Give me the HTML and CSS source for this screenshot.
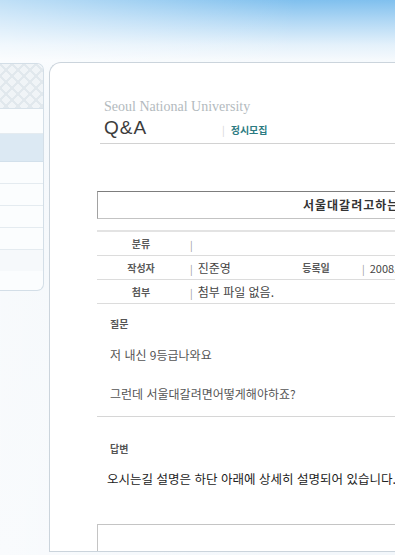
FILE: index.html
```html
<!doctype html>
<html lang="ko">
<head>
	<meta charset="UTF-8">
	<title>Q&amp;A - 서울대학교</title>
	<link rel="stylesheet" href="styles.css">
</head>
<body>
	<div id="page">
		<div class="top"></div>
		<div class="layout">
			<div class="side">
				<div class="side-pattern"></div>
				<ul class="side-menu">
					<li></li>
					<li class="on"></li>
					<li></li>
					<li></li>
					<li></li>
					<li></li>
					<li class="last"></li>
				</ul>
			</div>
			<div class="main">
				<div class="head">
					<p class="brand">Seoul National University</p>
					<div class="title-row">
						<span class="qa">Q&amp;A</span>
						<span class="cate"><i>|</i>정시모집</span>
					</div>
				</div>

				<div class="subject">서울대갈려고하는</div>
				<div class="band"></div>
				<div class="info">
					<div class="row">
						<span class="lbl">분류</span>
						<span class="val"><i>|</i></span>
					</div>
					<div class="row">
						<span class="lbl">작성자</span>
						<span class="val short"><i>|</i>진준영</span>
						<span class="lbl lbl2">등록일</span>
						<span class="val date"><i>|</i>2008.10.21</span>
					</div>
					<div class="row">
						<span class="lbl">첨부</span>
						<span class="val"><i>|</i>첨부 파일 없음.</span>
					</div>
				</div>

				<div class="question">
					<h4>질문</h4>
					<p class="first">저 내신 9등급나와요</p>
					<p>그런데 서울대갈려면어떻게해야하죠?</p>
				</div>

				<div class="answer">
					<h4>답변</h4>
					<p>오시는길 설명은 하단 아래에 상세히 설명되어 있습니다.</p>
				</div>

				<div class="reply-box"></div>
			</div>
		</div>
	</div>
</body>
</html>
```

FILE: styles.css
```css
* {
	margin: 0;
	padding: 0;
}
html, body {
	width: 395px;
	height: 555px;
	overflow: hidden;
}
body {
	font-family: "Noto Sans CJK KR", "Noto Sans", sans-serif;
	font-size: 12px;
	color: #444;
	background: #f1f6fa;
}
ul {
	list-style: none;
}
i {
	font-style: normal;
}
#page {
	height: 555px;
	background:
		linear-gradient(to right, rgba(255,255,255,.5), rgba(255,255,255,0) 75%),
		linear-gradient(to bottom, #80c0ee 0, #b3d9f5 22px, #e4f1fb 45px, #f6fafd 60px, #eef4f9 120px, #f3f7fb 100%);
}
.top {
	height: 62px;
}
.layout {
	display: flex;
	align-items: flex-start;
}

/* left menu */
.side {
	width: 43px;
	height: 226px;
	margin-top: 1px;
	background: #fbfdfe;
	border: 1px solid #d3dee7;
	border-left: 0;
	border-radius: 0 7px 7px 0;
	overflow: hidden;
	flex: none;
}
.side-pattern {
	height: 44px;
	border-bottom: 1px solid #d8e2ea;
	background-color: #f0f4f7;
	background-image:
		linear-gradient(45deg, transparent 44%, #e1e8ed 45%, #e1e8ed 55%, transparent 56%),
		linear-gradient(-45deg, transparent 44%, #e1e8ed 45%, #e1e8ed 55%, transparent 56%);
	background-size: 12px 12px;
}
.side-menu li {
	height: 21px;
	border-bottom: 1px solid #e4ebf0;
}
.side-menu li.on {
	height: 27px;
	background: #dce9f3;
	border-bottom-color: #d2e0eb;
}
.side-menu li:first-child {
	height: 24px;
}
.side-menu li.last {
	border-bottom: 0;
	background: #f6f9fb;
}

/* main panel */
.main {
	width: 620px;
	height: 488px;
	margin-left: 5px;
	padding-left: 47px;
	background: #fff;
	border: 1px solid #cbd4dc;
	border-right: 0;
	border-radius: 12px 0 0 0;
	overflow: hidden;
	flex: none;
}
.head {
	margin-left: 3px;
	padding-left: 4px;
	border-bottom: 1px solid #d2d2d2;
}
.brand {
	margin-top: 36px;
	font-family: "Liberation Serif", serif;
	font-size: 14px;
	line-height: 16px;
	color: #b3babe;
}
.title-row {
	display: flex;
	align-items: center;
	height: 28px;
}
.qa {
	width: 118px;
	margin-top: -2px;
	font-family: "Liberation Sans", sans-serif;
	font-size: 19px;
	letter-spacing: 1px;
	color: #3c3c3c;
}
.cate {
	margin-top: 0;
	font-size: 10px;
	font-weight: bold;
	color: #2d7b82;
}
.cate i {
	margin-right: 6px;
	font-weight: normal;
	color: #d4d4d4;
}

.subject {
	height: 26px;
	margin-top: 47px;
	padding-left: 205px;
	border: 1px solid #a2a2a2;
	border-top-color: #7d7d7d;
	border-bottom-color: #c3c3c3;
	font-size: 12px;
	font-weight: bold;
	line-height: 26px;
	letter-spacing: 1px;
	color: #333;
}
.band {
	height: 2px;
	margin-top: 11px;
	background: #e3e3e3;
}
.row {
	display: flex;
	align-items: center;
	height: 23px;
	border-bottom: 1px solid #dcdcdc;
}
.lbl {
	width: 88px;
	text-align: center;
	font-size: 10px;
	font-weight: bold;
	color: #5a5a5a;
}
.val {
	margin-left: 5px;
	font-size: 12px;
	color: #444;
}
.val i {
	margin-right: 5px;
	font-size: 10px;
	color: #9a9a9a;
}
.val.short {
	width: 95px;
}
.lbl2 {
	width: 62px;
}
.val.date {
	margin-left: 15px;
	font-size: 11px;
}

.question {
	padding-left: 13px;
	padding-bottom: 12px;
	border-bottom: 1px solid #d6d6d6;
}
h4 {
	font-size: 10px;
	line-height: 12px;
	color: #555;
}
.question h4 {
	margin-top: 14px;
}
.question p {
	margin-top: 19px;
	line-height: 20px;
	color: #555;
}
.question p.first {
	margin-top: 15px;
}
.answer h4 {
	margin-top: 26px;
	margin-left: 13px;
}
.answer p {
	margin-top: 14px;
	margin-left: 10px;
	font-size: 12.5px;
	line-height: 20px;
	color: #222;
}
.reply-box {
	height: 60px;
	margin-top: 35px;
	border: 1px solid #c4c4c4;
	border-right: 0;
}
```
